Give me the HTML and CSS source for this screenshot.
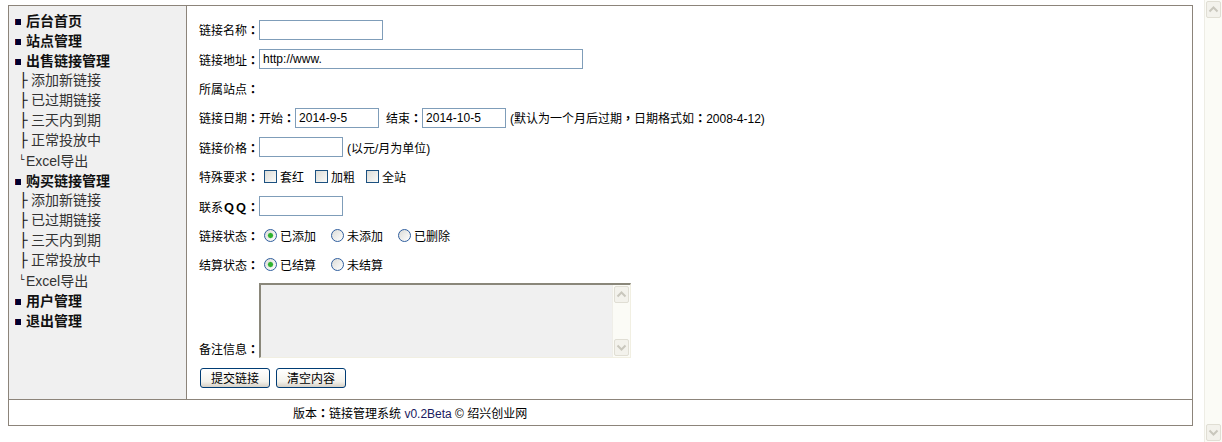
FILE: index.html
```html
<!DOCTYPE html>
<html lang="zh-CN">
<head>
<meta charset="UTF-8">
<title>链接管理系统</title>
<link rel="stylesheet" href="styles.css">
</head>
<body>
  <div class="frame">
    <div class="side">
      <div class="main-item"><span class="dot"></span>后台首页</div>
      <div class="main-item"><span class="dot"></span>站点管理</div>
      <div class="main-item"><span class="dot"></span>出售链接管理</div>
      <div class="sub-item"><span class="tree">├</span>添加新链接</div>
      <div class="sub-item"><span class="tree">├</span>已过期链接</div>
      <div class="sub-item"><span class="tree">├</span>三天内到期</div>
      <div class="sub-item"><span class="tree">├</span>正常投放中</div>
      <div class="sub-item last"><span class="tree small">└</span>Excel导出</div>
      <div class="main-item"><span class="dot"></span>购买链接管理</div>
      <div class="sub-item"><span class="tree">├</span>添加新链接</div>
      <div class="sub-item"><span class="tree">├</span>已过期链接</div>
      <div class="sub-item"><span class="tree">├</span>三天内到期</div>
      <div class="sub-item"><span class="tree">├</span>正常投放中</div>
      <div class="sub-item last"><span class="tree small">└</span>Excel导出</div>
      <div class="main-item"><span class="dot"></span>用户管理</div>
      <div class="main-item"><span class="dot"></span>退出管理</div>
    </div>
    <div class="content">
      <div class="row"><span class="lbl">链接名称<span class="c" lang="zh-TW">：</span></span><input class="txt w124" type="text"></div>
      <div class="row"><span class="lbl">链接地址<span class="c" lang="zh-TW">：</span></span><input class="txt w324" type="text" value="http://www."></div>
      <div class="row"><span class="lbl">所属站点<span class="c" lang="zh-TW">：</span></span></div>
      <div class="row">
        <span class="lbl">链接日期<span class="c" lang="zh-TW">：</span>开始<span class="c" lang="zh-TW">：</span></span><input class="txt w84" type="text" value="2014-9-5">
        <span class="gap7"></span><span>结束<span class="c" lang="zh-TW">：</span></span><input class="txt w84" type="text" value="2014-10-5">
        <span class="note">(默认为一个月后过期<span class="c" lang="zh-TW">，</span>日期格式如<span class="c" lang="zh-TW">：</span>2008-4-12)</span>
      </div>
      <div class="row"><span class="lbl">链接价格<span class="c" lang="zh-TW">：</span></span><input class="txt w84" type="text"><span class="note">(以元/月为单位)</span></div>
      <div class="row">
        <span class="lbl">特殊要求<span class="c" lang="zh-TW">：</span></span>
        <input class="cb" type="checkbox"><span class="opt">套红</span>
        <input class="cb" type="checkbox"><span class="opt">加粗</span>
        <input class="cb" type="checkbox"><span class="opt">全站</span>
      </div>
      <div class="row"><span class="lbl">联系<b class="qq">ＱＱ</b><span class="c" lang="zh-TW">：</span></span><input class="txt w84" type="text"></div>
      <div class="row">
        <span class="lbl">链接状态<span class="c" lang="zh-TW">：</span></span>
        <input class="rd" type="radio" name="st" checked><span class="opt">已添加</span>
        <input class="rd" type="radio" name="st"><span class="opt">未添加</span>
        <input class="rd" type="radio" name="st"><span class="opt">已删除</span>
      </div>
      <div class="row">
        <span class="lbl">结算状态<span class="c" lang="zh-TW">：</span></span>
        <input class="rd" type="radio" name="pay" checked><span class="opt">已结算</span>
        <input class="rd" type="radio" name="pay"><span class="opt">未结算</span>
      </div>
      <div class="row memo">
        <span class="lbl">备注信息<span class="c" lang="zh-TW">：</span></span>
        <div class="area">
          <textarea></textarea>
          <div class="vscroll">
            <span class="arrow"><svg width="11" height="7" viewBox="0 0 11 7"><path d="M1.5 5.5 L5.5 1.5 L9.5 5.5" fill="none" stroke="#c9c7bd" stroke-width="2"/></svg></span>
            <span class="arrow"><svg width="11" height="7" viewBox="0 0 11 7"><path d="M1.5 1.5 L5.5 5.5 L9.5 1.5" fill="none" stroke="#c9c7bd" stroke-width="2"/></svg></span>
          </div>
        </div>
      </div>
      <div class="buttons">
        <button class="btn">提交链接</button>
        <button class="btn">清空内容</button>
      </div>
    </div>
    <div class="foot">版本<span class="c" lang="zh-TW">：</span>链接管理系统 <span class="ver">v0.2Beta</span> © 绍兴创业网</div>
  </div>
  <div class="pagebar">
    <span class="arrow"><svg width="11" height="7" viewBox="0 0 11 7"><path d="M1.5 5.5 L5.5 1.5 L9.5 5.5" fill="none" stroke="#c9c7bd" stroke-width="2"/></svg></span>
    <span class="arrow"><svg width="11" height="7" viewBox="0 0 11 7"><path d="M1.5 1.5 L5.5 5.5 L9.5 1.5" fill="none" stroke="#c9c7bd" stroke-width="2"/></svg></span>
  </div>
</body>
</html>
```
FILE: styles.css
```css
html, body { background: #fff; }
body { margin: 5px 0 0 8px; font-family: "Liberation Sans", "Noto Sans CJK SC", sans-serif; font-size: 12px; color: #000; overflow: hidden; }
.c { font-family: "Noto Sans CJK TC", sans-serif; font-weight: bold; }
.qq { font-family: "Noto Sans CJK SC", sans-serif; font-weight: bold; }
.frame { width: 1183px; border: 1px solid #8c847a; display: grid; grid-template-columns: 178px 1fr; grid-template-rows: 393px 26px; }
.side { background: #f0f0f0; border-right: 1px solid #8c847a; padding: 4px 0 0 6px; font-size: 14px; }
.main-item { height: 20px; line-height: 20px; font-weight: bold; color: #111; font-family: "Noto Sans CJK SC", sans-serif; }
.dot { display: inline-block; width: 5px; height: 6px; background: #000033; border-left: 1px solid #6a1010; margin-right: 5px; vertical-align: 1px; }
.sub-item { height: 20px; line-height: 20px; color: #333; padding-left: 4px; }
.tree { display: inline-block; width: 12px; font-family: "DejaVu Sans Mono", monospace; font-weight: bold; color: #111; }
.tree.small { font-size: 9px; width: 7px; vertical-align: 3px; font-weight: normal; }
.content { padding: 9px 0 0 12px; }
.row { height: 29.4px; display: flex; align-items: center; white-space: nowrap; }
.txt { box-sizing: border-box; height: 20px; border: 1px solid #7f9db9; padding: 0 3px; font-family: "Liberation Sans", "Noto Sans CJK SC", sans-serif; font-size: 12px; color: #000; background: #fff; margin: 0; outline: none; }
.w124 { width: 124px; }
.w324 { width: 324px; }
.w84 { width: 84px; }
.gap7 { width: 7px; }
.note { margin-left: 4px; }
.cb, .rd { appearance: none; -webkit-appearance: none; width: 13px; height: 13px; margin: 0 3px 0 5px; box-sizing: border-box; }
.cb { border: 1px solid #1c5180; background: linear-gradient(135deg, #dcdcd7, #fbfbf9); }
.rd { border: 1px solid #2f5e9e; border-radius: 50%; background: linear-gradient(135deg, #dcdcd7, #fff); }
.rd:checked { background: radial-gradient(circle, #2fb22f 0 2px, #8fd18f 2.6px, transparent 3.2px), linear-gradient(135deg, #dcdcd7, #fff); }
.opt { margin-right: 10px; }
.cb + .opt { margin-right: 6px; }
.row.memo { height: auto; align-items: flex-end; margin-top: 3px; }
.memo .lbl { line-height: 16px; }
.area { display: flex; width: 372px; height: 75px; box-sizing: border-box; border-top: 2px solid #8a877a; border-left: 2px solid #8a877a; border-right: 1px solid #f1efe2; border-bottom: 1px solid #f1efe2; background: #f0f0f0; }
.area textarea { flex: 1; border: 0; resize: none; background: #f0f0f0; margin: 0; padding: 2px; outline: none; }
.vscroll { width: 17px; background: #fbfbf6; border-left: 1px solid #efeee8; display: flex; flex-direction: column; justify-content: space-between; }
.arrow { display: flex; align-items: center; justify-content: center; height: 15px; margin: 1px; border: 1px solid #e0ded4; border-radius: 2px; background: #f3f2ec; }
.buttons { display: flex; gap: 6px; margin: 10px 0 0 1px; }
.btn { box-sizing: border-box; width: 70px; height: 20px; padding: 0; border: 1px solid #003c74; border-radius: 3px; background: linear-gradient(#fff, #f3f2ec 70%, #d6d0c5); font-family: "Noto Sans CJK SC", sans-serif; font-size: 12px; line-height: 16px; color: #000; }
.foot { grid-column: 1 / 3; border-top: 1px solid #8c847a; padding-left: 284px; line-height: 25px; }
.ver { color: #1a1a60; }
.pagebar { position: fixed; top: 0; right: 0; width: 17px; height: 100%; background: #fbfbf6; border-left: 1px solid #eeede5; display: flex; flex-direction: column; justify-content: space-between; }
```
